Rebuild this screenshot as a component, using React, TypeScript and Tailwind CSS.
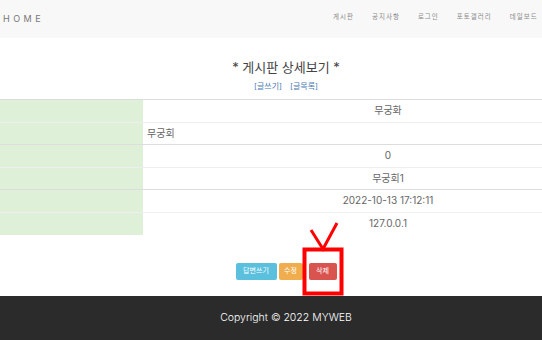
const navItems = ['게시판', '공지사항', '로그인', '포토갤러리', '데일보드'];

const rows: { value: string; align: 'center' | 'left' }[] = [
  { value: '무궁화', align: 'center' },
  { value: '무궁회', align: 'left' },
  { value: '0', align: 'center' },
  { value: '무궁회1', align: 'center' },
  { value: '2022-10-13 17:12:11', align: 'center' },
  { value: '127.0.0.1', align: 'center' },
];

const font = { fontFamily: 'Inter, "Noto Sans CJK KR", sans-serif' };

export default function App() {
  return (
    <div className="relative w-[542px] h-[340px] overflow-hidden bg-white" style={font}>
      {/* Navbar */}
      <div className="relative flex items-center h-[38px] bg-[#f8f8f8] w-[572px]">
        <span className="pl-[3px] text-[9px] tracking-[3.5px] text-[#777]">HOME</span>
        <ul className="absolute left-[333px] top-[13px] flex gap-[18px]">
          {navItems.map((item) => (
            <li key={item} className="text-[6.5px] tracking-[1px] text-[#888] whitespace-nowrap">
              {item}
            </li>
          ))}
        </ul>
      </div>

      {/* Title */}
      <div className="w-[572px] flex flex-col items-center pt-[20px]">
        <h2 className="text-[13px] font-normal text-[#444] leading-[18px]">* 게시판 상세보기 *</h2>
        <div className="flex gap-[8px] mt-[5px] text-[8px] text-[#4a7ab5] leading-[10px]">
          <span>[글쓰기]</span>
          <span>[글목록]</span>
        </div>
      </div>

      {/* Detail table */}
      <div className="mt-[8px] w-[633px] border-t border-[#ddd]">
        {rows.map((row, i) => (
          <div
            key={i}
            className={`flex h-[22.5px] ${i < rows.length - 1 ? (i % 2 === 0 ? 'border-b border-[#eee]' : 'border-b border-[#ddd]') : ''}`}
          >
            <div className="w-[143px] shrink-0 bg-[#dff0d8]" />
            <div
              className={`flex-1 flex items-center text-[10px] text-[#666] ${row.align === 'center' ? 'justify-center' : 'pl-[4px]'}`}
            >
              {row.value}
            </div>
          </div>
        ))}
      </div>

      {/* Buttons */}
      <div className="w-[572px] flex justify-center gap-[2px] mt-[28px]">
        <button className="h-[17px] w-[41px] rounded-[2px] bg-[#5bc0de] text-white text-[7px]">답변쓰기</button>
        <button className="h-[17px] w-[24px] rounded-[2px] bg-[#f0ad4e] text-white text-[7px]">수정</button>
        <button className="h-[17px] w-[28px] ml-[4px] rounded-[2px] bg-[#d9534f] text-white text-[7px]">삭제</button>
      </div>

      {/* Footer */}
      <div className="absolute left-0 top-[296px] w-[572px] h-[44px] bg-[#2b2b2b] flex items-center justify-center">
        <span className="text-white text-[10.5px] font-light">Copyright © 2022 MYWEB</span>
      </div>

      {/* Red annotation */}
      <svg className="absolute left-0 top-0 pointer-events-none" width="542" height="340">
        <rect x="304.5" y="249.5" width="37" height="44" fill="none" stroke="#ff0000" strokeWidth="4" />
        <polyline points="311,230 323,249 337,223" fill="none" stroke="#ff0000" strokeWidth="3" />
      </svg>
    </div>
  );
}
